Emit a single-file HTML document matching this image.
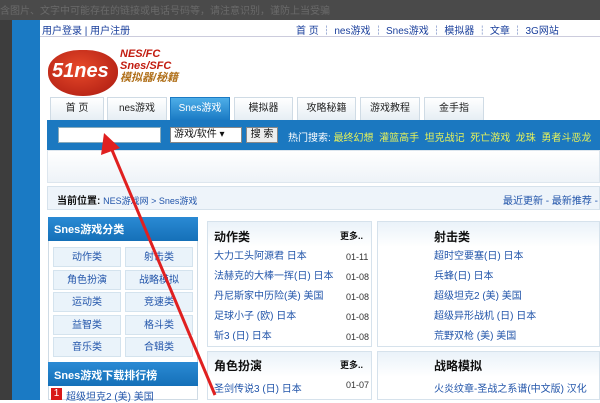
<html><head><style>
body{margin:0;width:600px;height:400px;overflow:hidden;background:#fff;font-family:"Liberation Sans","Noto Sans CJK SC",sans-serif;font-size:10px;position:relative}
div{position:absolute;box-sizing:border-box}
.t{white-space:nowrap}
.tab{top:97px;height:23px;background:linear-gradient(#fff,#e6eef4);border:1px solid #cfdbe5;border-bottom:none;text-align:center;line-height:22px;font-size:10px;color:#222}
.g{width:68px;height:20px;background:#eaf3fa;border:1px solid #d4e3ee;text-align:center;line-height:19px;color:#2255aa;font-size:10px}
.li{color:#2255aa;font-size:10px}
.d{color:#333;font-size:9px}
</style></head><body>
<div style="left:0;top:0;width:600px;height:20px;background:#4a4a4a"></div>
<div class="t" style="left:0;top:2px;color:#6a6a6a;font-size:10px">含图片、文字中可能存在的链接或电话号码等，请注意识别，谨防上当受骗</div>
<div style="left:0;top:20px;width:12px;height:380px;background:#3d3d3d"></div>
<div style="left:12px;top:20px;width:28px;height:380px;background:#1a7ac4"></div>
<div style="left:40px;top:20px;width:560px;height:17px;border-bottom:1px solid #ccd;background:#fff"></div>
<div class="t" style="left:42px;top:22px;color:#1a3f9c;font-size:10px">用户登录 | 用户注册</div>
<div class="t" style="left:296px;top:22px;color:#1a3f9c;font-size:10px">首 页 ┆ nes游戏 ┆ Snes游戏 ┆ 模拟器 ┆ 文章 ┆ 3G网站</div>
<div style="left:48px;top:50px;width:70px;height:46px;background:radial-gradient(ellipse at 45% 40%,#e84a2a,#a81810);border-radius:45% 45% 50% 50%"></div>
<div class="t" style="left:52px;top:60px;color:#fff;font-size:20px;font-weight:bold;font-style:italic">51nes</div>
<div class="t" style="left:120px;top:48px;color:#c21c10;font-size:11px;font-weight:bold;font-style:italic;line-height:12px">NES/FC<br>Snes/SFC<br><span style="color:#b0701a">模拟器/秘籍</span></div>
<div class="tab" style="left:50px;width:54px">首 页</div>
<div class="tab" style="left:107px;width:60px">nes游戏</div>
<div class="tab" style="left:170px;width:60px;background:linear-gradient(#4eaee8,#1a7ac4);color:#fff;border-color:#1a7ac4">Snes游戏</div>
<div class="tab" style="left:234px;width:59px">模拟器</div>
<div class="tab" style="left:297px;width:59px">攻略秘籍</div>
<div class="tab" style="left:360px;width:60px">游戏教程</div>
<div class="tab" style="left:424px;width:60px">金手指</div>
<div style="left:47px;top:120px;width:553px;height:30px;background:#1b78c0"></div>
<div style="left:58px;top:127px;width:103px;height:16px;background:#fff;border:1px solid #8ab"></div>
<div class="t" style="left:170px;top:127px;width:72px;height:16px;background:#fff;border:1px solid #888;color:#111;padding-left:3px;line-height:14px">游戏/软件 ▾</div>
<div class="t" style="left:246px;top:127px;width:32px;height:16px;background:#eee;border:1px solid #888;color:#111;text-align:center;line-height:14px">搜 索</div>
<div class="t" style="left:288px;top:129px;color:#fff">热门搜索: <span style="color:#e6f25a">最终幻想 &nbsp;灌篮高手 &nbsp;坦克战记 &nbsp;死亡游戏 &nbsp;龙珠 &nbsp;勇者斗恶龙</span></div>
<div style="left:47px;top:150px;width:553px;height:33px;background:linear-gradient(#fff,#eef3f8);border:1px solid #dde6ee"></div>
<div style="left:47px;top:186px;width:553px;height:24px;background:#eef4fa;border:1px solid #d6e2ec"></div>
<div class="t" style="left:57px;top:192px;color:#111;font-weight:bold">当前位置: <span style="font-weight:normal;color:#2255aa;font-size:9px">NES游戏网 &gt; Snes游戏</span></div>
<div class="t" style="left:503px;top:192px;color:#2255aa">最近更新 - 最新推荐 -</div>
<div style="left:48px;top:217px;width:150px;height:183px;border:1px solid #cfdbe5"></div>
<div class="t" style="left:48px;top:217px;width:150px;height:24px;background:linear-gradient(#2a8ad4,#1570b8);color:#fff;font-weight:bold;font-size:11px;padding:4px 6px">Snes游戏分类</div>
<div class="g" style="left:53px;top:247px">动作类</div><div class="g" style="left:125px;top:247px">射击类</div>
<div class="g" style="left:53px;top:270px">角色扮演</div><div class="g" style="left:125px;top:270px">战略模拟</div>
<div class="g" style="left:53px;top:292px">运动类</div><div class="g" style="left:125px;top:292px">竞速类</div>
<div class="g" style="left:53px;top:315px">益智类</div><div class="g" style="left:125px;top:315px">格斗类</div>
<div class="g" style="left:53px;top:337px">音乐类</div><div class="g" style="left:125px;top:337px">合辑类</div>
<div class="t" style="left:48px;top:362px;width:150px;height:24px;background:linear-gradient(#2a8ad4,#1570b8);color:#fff;font-weight:bold;font-size:11px;padding:5px 6px">Snes游戏下载排行榜</div>
<div style="left:51px;top:388px;width:11px;height:12px;background:#d81818;color:#fff;text-align:center;font-size:10px;line-height:12px">1</div>
<div class="t li" style="left:66px;top:388px">超级坦克2 (美) 美国</div>
<div style="left:207px;top:221px;width:165px;height:126px;border:1px solid #d6e2ec;background:linear-gradient(#eaf2f9 0,#fff 25px)"></div>
<div style="left:377px;top:221px;width:223px;height:126px;border:1px solid #d6e2ec;background:linear-gradient(#eaf2f9 0,#fff 25px)"></div>
<div style="left:207px;top:351px;width:165px;height:49px;border:1px solid #d6e2ec;background:linear-gradient(#eaf2f9 0,#fff 25px)"></div>
<div style="left:377px;top:351px;width:223px;height:49px;border:1px solid #d6e2ec;background:linear-gradient(#eaf2f9 0,#fff 25px)"></div>
<div class="t" style="left:214px;top:228px;font-weight:bold;font-size:12px;color:#111">动作类</div>
<div class="t" style="left:340px;top:229px;font-size:9px;color:#111;font-weight:bold">更多..</div>
<div class="t" style="left:434px;top:228px;font-weight:bold;font-size:12px;color:#111">射击类</div>
<div class="t" style="left:214px;top:357px;font-weight:bold;font-size:12px;color:#111">角色扮演</div>
<div class="t" style="left:340px;top:358px;font-size:9px;color:#111;font-weight:bold">更多..</div>
<div class="t" style="left:434px;top:357px;font-weight:bold;font-size:12px;color:#111">战略模拟</div>
<div class="t li" style="left:214px;top:247px;line-height:20px">大力工头阿源君 日本<br>法赫克的大棒一挥(日) 日本<br>丹尼斯家中历险(美) 美国<br>足球小子 (欧) 日本<br>斩3 (日) 日本</div>
<div class="t d" style="left:346px;top:247px;line-height:20px">01-11<br>01-08<br>01-08<br>01-08<br>01-08</div>
<div class="t li" style="left:434px;top:247px;line-height:20px">超时空要塞(日) 日本<br>兵蜂(日) 日本<br>超级坦克2 (美) 美国<br>超级异形战机 (日) 日本<br>荒野双枪 (美) 美国</div>
<div class="t li" style="left:214px;top:380px">圣剑传说3 (日) 日本</div>
<div class="t d" style="left:346px;top:380px">01-07</div>
<div class="t li" style="left:434px;top:380px">火炎纹章-圣战之系谱(中文版) 汉化</div>
<svg style="position:absolute;left:0;top:0" width="600" height="400"><line x1="112" y1="150" x2="215" y2="395" stroke="#e02020" stroke-width="3"/><polygon points="104,133 101,155 120,148" fill="#e02020"/></svg>
</body></html>
